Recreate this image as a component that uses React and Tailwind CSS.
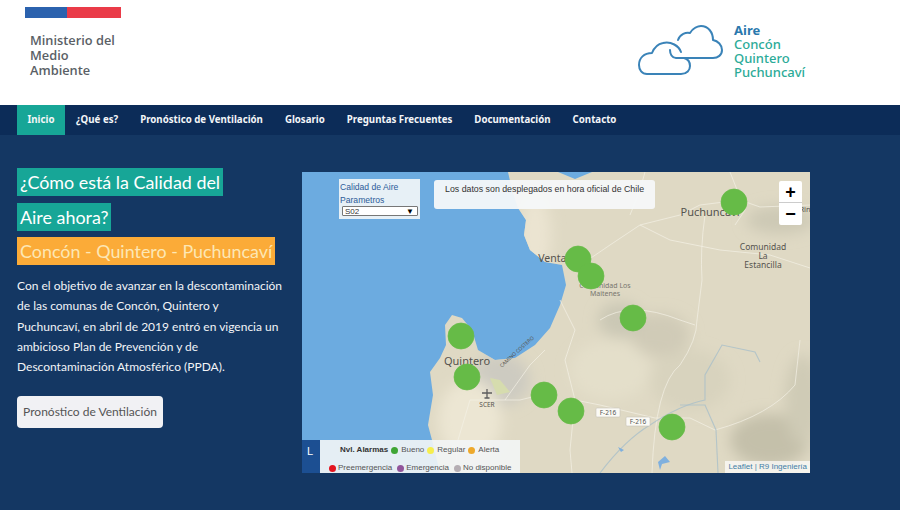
import React from 'react';

const navItems = ['¿Qué es?', 'Pronóstico de Ventilación', 'Glosario', 'Preguntas Frecuentes', 'Documentación', 'Contacto'];

const markers = [
  [734, 202], [578, 259], [591, 276], [633, 318], [461, 336],
  [467, 377], [544, 395], [571, 411], [672, 427],
];

const landPath = 'M508,172 L558,172 L575,179 L592,172 L810,172 L810,473 L440,473 L432,440 L428,425 L433,395 L430,372 L440,358 L446,345 L445,325 L452,315 L462,318 L472,330 L478,350 L495,360 L515,358 L535,345 L550,328 L560,305 L566,285 L562,265 L545,262 L530,250 L524,235 L526,220 L518,208 L512,190 Z';

const roads = [
  'M810,205 L760,207 L740,200 L700,205 L680,215 L640,225 L610,245 L585,262',
  'M640,225 L670,240 L720,250 L770,255 L810,268',
  'M705,215 Q700,250 702,280 L697,320 Q697,340 680,365 Q655,385 652,473',
  'M600,320 Q630,300 680,320 L695,325',
  'M560,300 L575,330 L565,360 L575,400 L570,450 L572,473',
  'M575,400 L600,405 L655,418 L690,418 L715,430 Q770,415 795,385 L800,340',
  'M470,400 L520,400 L540,395',
  'M470,400 L458,440 L455,473',
  'M505,400 L530,365 L545,350',
  'M730,172 L745,210 L735,225',
  'M645,172 L640,190 L630,215',
];

const rivers = [
  'M600,473 Q625,440 650,425 Q680,405 705,400 L705,375 L722,345 L755,352 L760,362',
  'M680,405 L705,405 L716,430 L718,473',
];

const hills = [
  [770, 440, 40, 26, '#c4c0aa'], [803, 400, 18, 45, '#cfcbb6'], [660, 335, 30, 22, '#d0cbb7'],
  [620, 320, 22, 18, '#cbc8b5'], [780, 220, 34, 14, '#cdc9b5'], [610, 370, 40, 30, '#e4dfca'],
  [500, 380, 30, 26, '#cdcbc1'], [470, 420, 32, 40, '#ece6d3'], [535, 235, 16, 40, '#ebe4d1'],
  [690, 380, 40, 30, '#d8d3be'],
];

function MapDrawing() {
  return (
    <svg viewBox="302 172 508 301" className="block h-full w-full">
      <defs>
        <filter id="soft">
          <feGaussianBlur stdDeviation="7" />
        </filter>
        <clipPath id="land">
          <path d={landPath} />
        </clipPath>
      </defs>
      <rect x="302" y="172" width="508" height="301" fill="#6cabe0" />
      <path d={landPath} fill="#dfd9c4" />
      <g clipPath="url(#land)">
        <g filter="url(#soft)">
          {hills.map(([cx, cy, rx, ry, fill], i) => (
            <ellipse key={i} cx={cx} cy={cy} rx={rx} ry={ry} fill={fill} />
          ))}
        </g>
      </g>
      <path d="M490,378 L500,380 L510,392 L497,395 Z" fill="#d6dcae" />
      {roads.map((d, i) => (
        <path key={i} d={d} fill="none" stroke="#f4f1e6" strokeOpacity="0.7" strokeWidth="1" />
      ))}
      {rivers.map((d, i) => (
        <path key={i} d={d} fill="none" stroke="#a9bfc9" strokeOpacity="0.8" strokeWidth="1.1" />
      ))}
      <path d="M658,462 L665,456 L670,462 L662,464 L660,470 Z" fill="#7fb0de" />
      <path d="M618,447 L624,450 L621,452 Z" fill="#7fb0de" />

      <g fontFamily="'Noto Sans', sans-serif" fill="#55534e" textAnchor="middle">
        <text x="710" y="216" fontSize="11">Puchuncaví</text>
        <text x="763" y="250" fontSize="8.5">Comunidad</text>
        <text x="763" y="259" fontSize="8.5">La</text>
        <text x="763" y="268" fontSize="8.5">Estancilla</text>
        <text x="561" y="262" fontSize="10.5">Ventanas</text>
        <text x="605" y="288" fontSize="7" fill="#77756e">Comunidad Los</text>
        <text x="605" y="296" fontSize="7" fill="#77756e">Maitenes</text>
        <text x="467" y="365" fontSize="11">Quintero</text>
        <text x="487" y="407" fontSize="6.5">SCER</text>
        <text x="805" y="212" fontSize="7.5">Rin</text>
        <text x="518" y="353" fontSize="5" transform="rotate(-42 518 353)">CAMINO COSTERO</text>
      </g>
      <path d="M487,389 L487,398 M482,393 L492,393 M484.5,398 L489.5,398" stroke="#5c5c5c" strokeWidth="1.3" fill="none" />

      {[[596, 408], [626, 417]].map(([x, y]) => (
        <g key={x}>
          <rect x={x} y={y} width="24" height="9" rx="1" fill="#fbfaf5" stroke="#c8c5ba" strokeWidth="0.6" />
          <text x={x + 12} y={y + 7} fontSize="6.5" textAnchor="middle" fill="#555" fontFamily="'Noto Sans', sans-serif">F-216</text>
        </g>
      ))}

      {markers.map(([cx, cy]) => (
        <circle key={`${cx}-${cy}`} cx={cx} cy={cy} r="13" fill="#66bb47" stroke="#66bb47" strokeOpacity="0.7" strokeWidth="1" />
      ))}
    </svg>
  );
}

const legendDot = 'inline-block h-[7px] w-[7px] rounded-full';

function Legend() {
  return (
    <div className="absolute bottom-0 left-0 flex h-[33px] w-[218px] font-['Liberation_Sans',sans-serif] text-[8px] text-[#555]">
      <div className="w-[18px] bg-[#1c4f92] pl-[5px] pt-[3px] text-[11px] text-white">L</div>
      <div className="flex-1 bg-[#f3f5f6]/90 pt-[4px]">
        <div className="flex items-center gap-[3px] pl-[20px]">
          <span className="font-semibold text-[#333]">Nvl. Alarmas</span>
          <span className={`${legendDot} bg-[#3fa535]`}></span>
          <span>Bueno</span>
          <span className={`${legendDot} bg-[#f6ee4e]`}></span>
          <span>Regular</span>
          <span className={`${legendDot} bg-[#eea92c]`}></span>
          <span>Alerta</span>
        </div>
        <div className="mt-[6px] flex items-center gap-[2px] pl-[9px]">
          <span className={`${legendDot} bg-[#e3141f]`}></span>
          <span>Preemergencia</span>
          <span className={`${legendDot} ml-[3px] bg-[#91559b]`}></span>
          <span>Emergencia</span>
          <span className={`${legendDot} ml-[3px] bg-[#b5aeb3]`}></span>
          <span>No disponible</span>
        </div>
      </div>
    </div>
  );
}

function MapPanel() {
  return (
    <div className="relative mt-[37px] h-[301px] w-[508px] shrink-0 overflow-hidden">
      <MapDrawing />

      {/* selector de parametros */}
      <div className="absolute left-[37px] top-[7px] h-[40px] w-[81px] bg-[#eef3f7]/95 pl-[1px] pt-[2px] font-['Liberation_Sans',sans-serif] text-[8.6px] leading-[13px] text-[#2d5c99]">
        <div>Calidad de Aire</div>
        <div>Parametros</div>
        <div className="ml-[2px] mt-[-1px] flex h-[10px] w-[76px] items-center justify-between rounded-[1px] border border-[#777] bg-white pl-[2px] pr-[3px] text-[8px] text-[#333]">
          <span>S02</span>
          <span className="text-[8px] text-black">▼</span>
        </div>
      </div>

      {/* aviso */}
      <div className="absolute left-[132px] top-[8px] h-[29px] w-[221px] rounded-[3px] bg-[#f6f8f9]/95 pl-[11px] pt-[3px] font-['Liberation_Sans',sans-serif] text-[8.8px] leading-[13px] text-[#333]">
        Los datos son desplegados en hora oficial de Chile
      </div>

      {/* zoom */}
      <div className="absolute left-[477px] top-[9px] w-[23px] rounded-[2px] bg-white font-['Liberation_Sans',sans-serif] text-[18px] font-bold leading-[22px] text-black">
        <div className="h-[22px] border-b border-[#ccc] text-center">+</div>
        <div className="h-[22px] text-center">−</div>
      </div>

      <Legend />

      <div className="absolute bottom-0 right-0 flex h-[12px] items-center bg-white/70 px-[3px] font-['Liberation_Sans',sans-serif] text-[8px] text-[#3f7fa8]">
        Leaflet | R9 Ingeniería
      </div>
    </div>
  );
}

function Clouds() {
  return (
    <svg width="86" height="52" viewBox="0 0 86 52" fill="none" stroke="#3a83b8" strokeWidth="2" strokeLinecap="round" strokeLinejoin="round">
      <path d="M40,15 C42,9 48,7 52,8 C55,3 60,1 63,1 C70,1 75,7 75,15 C80,16 84,20 84,25 C84,30 80,33 75,33 L38,33 C34,33 32,29 32,25" />
      <path d="M43,27 C41,21 33,16 25,18 C20,19 16,23 14,28 C6,28 1,33 1,40 C1,45 4,49 9,49 L43,49 C49,49 52,45 52,41 C52,37 50,34 46,33" />
    </svg>
  );
}

function Header() {
  return (
    <header className="flex h-[105px] items-start justify-between bg-white">
      <div className="pl-[25px] pt-[7px]">
        <div className="flex h-[11px] w-[96px]">
          <div className="w-[42px] bg-[#2b62ae]"></div>
          <div className="flex-1 bg-[#ea3b48]"></div>
        </div>
        <div className="mt-[15px] pl-[5px] font-['Open_Sans',sans-serif] text-[12.8px] font-semibold leading-[15px] text-[#5a5f66]">
          <div>Ministerio del</div>
          <div>Medio</div>
          <div>Ambiente</div>
        </div>
      </div>
      <div className="flex w-[262px] items-start pt-[23px]">
        <div className="pt-[2px]"><Clouds /></div>
        <div className="ml-[10px] font-['Noto_Sans',sans-serif] text-[13px] font-medium leading-[14px] text-[#2cab98]">
          <div className="font-bold text-[#2a78ad]">Aire</div>
          <div>Concón</div>
          <div>Quintero</div>
          <div>Puchuncaví</div>
        </div>
      </div>
    </header>
  );
}

function Nav() {
  return (
    <nav className="flex h-[30px] items-stretch bg-[#0c2c58] pl-[17px] font-['Noto_Sans',sans-serif] text-[9.7px] font-bold text-[#f4f6f8]">
      <a className="flex w-[48px] items-center justify-center bg-[#17a697] pt-[1px]">Inicio</a>
      {navItems.map(item => (
        <a key={item} className="flex items-center px-[11px] pt-[1px]">{item}</a>
      ))}
    </nav>
  );
}

export default function App() {
  return (
    <div className="h-[510px] w-[900px] overflow-hidden bg-[#143763]">
      <Header />
      <Nav />
      <main className="flex items-start pl-[17px] pt-0">
        <div className="w-[268px] shrink-0 pt-[33px] font-['Lato',sans-serif] text-white">
          <h2 className="flex flex-col items-start gap-[6.5px] text-[17.9px] font-normal leading-[28px]">
            <span className="bg-[#17a697] px-[3px]">¿Cómo está la Calidad del</span>
            <span className="bg-[#17a697] px-[3px]">Aire ahora?</span>
            <span className="bg-[#fbab38] px-[3px] text-[#fde7b4]">Concón - Quintero - Puchuncaví</span>
          </h2>
          <p className="mt-[11px] w-[265px] text-[12px] leading-[20.3px] text-[#f2f4f7]">
            Con el objetivo de avanzar en la descontaminación de las comunas de Concón, Quintero y Puchuncaví, en abril de 2019 entró en vigencia un ambicioso Plan de Prevención y de Descontaminación Atmosférico (PPDA).
          </p>
          <button className="mt-[19px] h-[32px] w-[146px] rounded-[4px] bg-[#f1f1f4] text-[12px] text-[#555]">
            Pronóstico de Ventilación
          </button>
        </div>
        <div className="ml-[17px]">
          <MapPanel />
        </div>
      </main>
    </div>
  );
}
